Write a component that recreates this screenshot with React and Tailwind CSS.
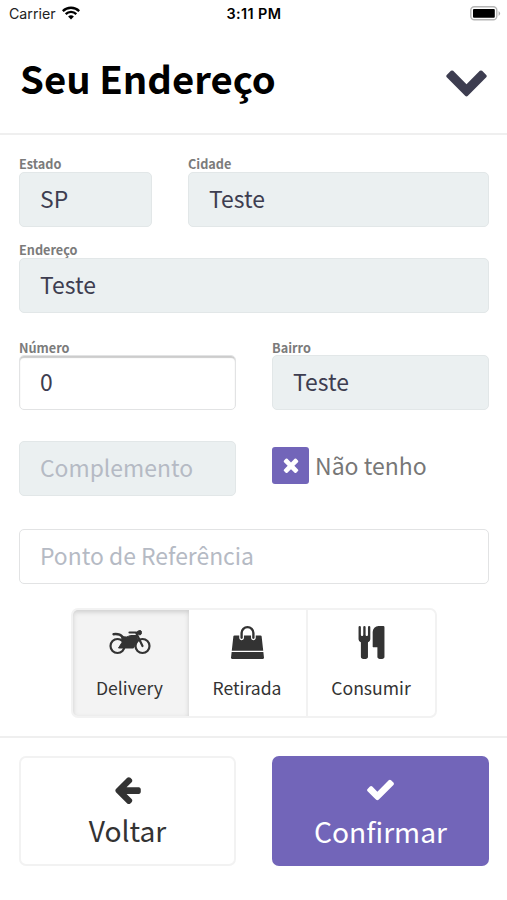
import React, { useState } from "react";

const ICONS = {
  arrow: "M1664 896v128q0 53-32.5 90.5t-84.5 37.5h-704l293 294q38 36 38 90t-38 90l-75 76q-37 37-90 37-52 0-91-37l-651-652q-37-37-37-90 0-52 37-91l651-650q38-38 91-38 52 0 90 38l75 74q38 38 38 91t-38 91l-293 293h704q52 0 84.5 37.5t32.5 90.5z",
  check: "M1671 566q0 40-28 68l-724 724-136 136q-28 28-68 28t-68-28l-136-136-362-362q-28-28-28-68t28-68l136-136q28-28 68-28t68 28l294 295 656-657q28-28 68-28t68 28l136 136q28 28 28 68z",
  times: "M1490 1322q0 40-28 68l-136 136q-28 28-68 28t-68-28l-294-294-294 294q-28 28-68 28t-68-28l-136-136q-28-28-28-68t28-68l294-294-294-294q-28-28-28-68t28-68l136-136q28-28 68-28t68 28l294 294 294-294q28-28 68-28t68 28l136 136q28 28 28 68t-28 68l-294 294 294 294q28 28 28 68z",
  chevron: "M1683 808l-742 741q-19 19-45 19t-45-19l-742-741q-19-19-19-45.5t19-45.5l166-165q19-19 45-19t45 19l531 531 531-531q19-19 45-19t45 19l166 165q19 19 19 45.5t-19 45.5z",
  bag: "M1757 1408l35 313q3 28-16 50-19 21-48 21h-1664q-29 0-48-21-19-22-16-50l35-313h1722zm-93-839l86 775h-1708l86-775q3-24 21-40.5t43-16.5h256v128q0 53 37.5 90.5t90.5 37.5 90.5-37.5 37.5-90.5v-128h384v128q0 53 37.5 90.5t90.5 37.5 90.5-37.5 37.5-90.5v-128h256q25 0 43 16.5t21 40.5zm-384-185v256q0 26-19 45t-45 19-45-19-19-45v-256q0-106-75-181t-181-75-181 75-75 181v256q0 26-19 45t-45 19-45-19-19-45v-256q0-159 112.5-271.5t271.5-112.5 271.5 112.5 112.5 271.5z",
  cutlery: "M832 64v640q0 61-35.5 111t-92.5 70v779q0 52-38 90t-90 38h-128q-52 0-90-38t-38-90v-779q-57-20-92.5-70t-35.5-111v-640q0-26 19-45t45-19 45 19 19 45v416q0 26 19 45t45 19 45-19 19-45v-416q0-26 19-45t45-19 45 19 19 45v416q0 26 19 45t45 19 45-19 19-45v-416q0-26 19-45t45-19 45 19 19 45zm768 0v1600q0 52-38 90t-90 38h-128q-52 0-90-38t-38-90v-512h-224q-13 0-22.5-9.5t-9.5-22.5v-800q0-132 94-226t226-94h256q26 0 45 19t19 45z",
};

const Icon = ({ name, className }) => (
  <svg viewBox="0 0 1792 1792" fill="currentColor" className={className}>
    <path d={ICONS[name]} />
  </svg>
);

const Motorcycle = () => (
  <svg viewBox="0 0 42 26" className="w-[42px] h-[26px]" fill="none" stroke="currentColor">
    <circle cx="8.5" cy="16" r="7" strokeWidth="2.2" />
    <circle cx="33.5" cy="16" r="7" strokeWidth="2.2" />
    <path d="M20.5 2.5h6.5l6.5 13.5" strokeWidth="2.2" strokeLinecap="round" />
    <path d="M4.5 4.2q6-.8 9 2.6" strokeWidth="2.4" strokeLinecap="round" />
    <path d="M12.5 6.5q5.5 1.5 9-1h6.5l.5 4.5-4 8H9.5l3.8-6z" fill="currentColor" />
    <path d="M27 3q1.5-2.5 4-2.5 1.5 0 1.5 2t-1.5 2.5z" fill="currentColor" />
  </svg>
);

const Field = ({ label, value, placeholder, disabled, className = "", inputClass = "" }) => (
  <label className={`flex flex-col ${className}`}>
    {label && (
      <span className="h-[15px] text-[12.7px] leading-[14px] font-bold text-[#7b7b7b]">{label}</span>
    )}
    <input
      defaultValue={value}
      placeholder={placeholder}
      disabled={disabled}
      className={`h-[55px] w-full rounded-[5px] border px-[20px] pb-[3px] text-[22.9px] text-[#3d3d50] placeholder:text-[#b5bac4] outline-none ${
        disabled ? "bg-[#ebf0f1] border-[#e2e7e8]" : "bg-white border-[#e2e3e4]"
      } ${inputClass}`}
    />
  </label>
);

const App = () => {
  const [tipo, setTipo] = useState("delivery");

  return (
    <div className="flex h-[900px] w-[507px] flex-col overflow-hidden bg-white font-['Noto_Sans_CJK_SC',sans-serif]">
      {/* Status bar */}
      <div className="grid h-[27px] shrink-0 grid-cols-3 items-center pr-[6px] pl-[9px] font-['Inter',sans-serif] text-[14.2px] text-[#222]">
        <div className="flex items-center gap-[6px]">
          <span>Carrier</span>
          <svg viewBox="0 0 18 14" className="mb-px h-[14px] w-[18px]" fill="none" stroke="#000" strokeWidth="2.3">
            <path d="M.8 5.1a11.7 11.7 0 0 1 16.4 0M3.7 8.1a7.5 7.5 0 0 1 10.6 0" />
            <path d="M6.1 10.6a4.1 4.1 0 0 1 5.8 0L9 13.5z" fill="#000" stroke="none" />
          </svg>
        </div>
        <span className="pr-[2px] text-center text-[14.4px] font-semibold tracking-[0.4px] text-black">3:11 PM</span>
        <svg viewBox="0 0 31 15" className="h-[15px] w-[31px] justify-self-end">
          <rect x=".8" y=".8" width="26" height="13" rx="3.5" fill="#fff" stroke="#b5b5b5" strokeWidth="1.4" />
          <rect x="3" y="3" width="21.8" height="8.8" rx="1" />
          <path d="M28.6 5q3 2.4 0 5z" fill="#aaa" />
        </svg>
      </div>

      {/* Header */}
      <header className="flex h-[108px] shrink-0 items-center justify-between border-b-2 border-[#efefef] pr-[18px] pb-[2px] pl-[20px]">
        <h1 className="pb-[2px] text-[38.3px] leading-[50px] font-bold text-black">Seu Endereço</h1>
        <Icon name="chevron" className="h-[45px] w-[45px] text-[#3d3d50]" />
      </header>

      {/* Form */}
      <main className="flex shrink-0 flex-col pt-[22px] pr-[18px] pl-[19px]">
        <div className="flex gap-[36px]">
          <Field label="Estado" value="SP" disabled className="w-[133px]" />
          <Field label="Cidade" value="Teste" disabled className="flex-1" />
        </div>
        <Field label="Endereço" value="Teste" disabled className="mt-[16px]" />
        <div className="mt-[28px] grid grid-cols-2 gap-[36px]">
          <Field label="Número" value="0" inputClass="-mt-px shadow-[inset_0_2px_1px_#ccc]" />
          <Field label="Bairro" value="Teste" disabled inputClass="-mt-px" />
        </div>
        <div className="mt-[31px] grid grid-cols-2 items-center gap-[36px]">
          <Field placeholder="Complemento" disabled />
          <div className="flex items-center gap-[6px] pb-[6px]">
            <button className="flex h-[37px] w-[37px] items-center justify-center rounded-[3px] bg-[#7265b9] text-white">
              <Icon name="times" className="mb-[2px] h-[22px] w-[22px]" />
            </button>
            <span className="pb-[2px] text-[23px] leading-[36px] text-[#777]">Não tenho</span>
          </div>
        </div>
        <Field placeholder="Ponto de Referência" className="mt-[33px]" />

        {/* Tipo de pedido */}
        <div className="mt-[24px] mr-px flex h-[110px] w-[366px] self-center overflow-hidden rounded-[7px] border-2 border-[#f2f2f2] text-[17.6px] text-[#333]">
          <button
            onClick={() => setTipo("delivery")}
            className={`flex w-[116px] flex-col items-center pt-[16px] pr-[2px] ${
              tipo === "delivery" ? "bg-[#f3f3f3] shadow-[inset_0_2px_5px_#ccc]" : ""
            }`}
          >
            <span className="flex h-[34px] items-center"><Motorcycle /></span>
            <span className="mt-[15px] leading-[26px]">Delivery</span>
          </button>
          <button
            onClick={() => setTipo("retirada")}
            className={`flex w-[119px] flex-col items-center border-r-2 border-[#f2f2f2] pt-[16px] ${
              tipo === "retirada" ? "bg-[#f3f3f3] shadow-[inset_0_2px_5px_#ccc]" : ""
            }`}
          >
            <Icon name="bag" className="h-[33px] w-[33px]" />
            <span className="mt-[16px] leading-[26px]">Retirada</span>
          </button>
          <button
            onClick={() => setTipo("consumir")}
            className={`flex flex-1 flex-col items-center pt-[16px] ${
              tipo === "consumir" ? "bg-[#f3f3f3] shadow-[inset_0_2px_5px_#ccc]" : ""
            }`}
          >
            <Icon name="cutlery" className="h-[33px] w-[33px]" />
            <span className="mt-[16px] leading-[26px]">Consumir</span>
          </button>
        </div>
      </main>

      {/* Footer */}
      <footer className="mt-[18px] grid shrink-0 grid-cols-2 gap-[36px] border-t-2 border-[#efefef] pt-[18px] pr-[18px] pl-[19px] text-[28.2px]">
        <button className="flex h-[110px] flex-col items-center rounded-[7px] border-2 border-[#f2f2f2] pt-[16px] text-[#333]">
          <Icon name="arrow" className="h-[31px] w-[31px]" />
          <span className="mt-[5px] leading-[40px]">Voltar</span>
        </button>
        <button className="flex h-[110px] flex-col items-center rounded-[7px] bg-[#7265b9] pt-[18px] text-white">
          <Icon name="check" className="h-[31px] w-[31px]" />
          <span className="mt-[6px] leading-[40px]">Confirmar</span>
        </button>
      </footer>
    </div>
  );
};

export default App;
